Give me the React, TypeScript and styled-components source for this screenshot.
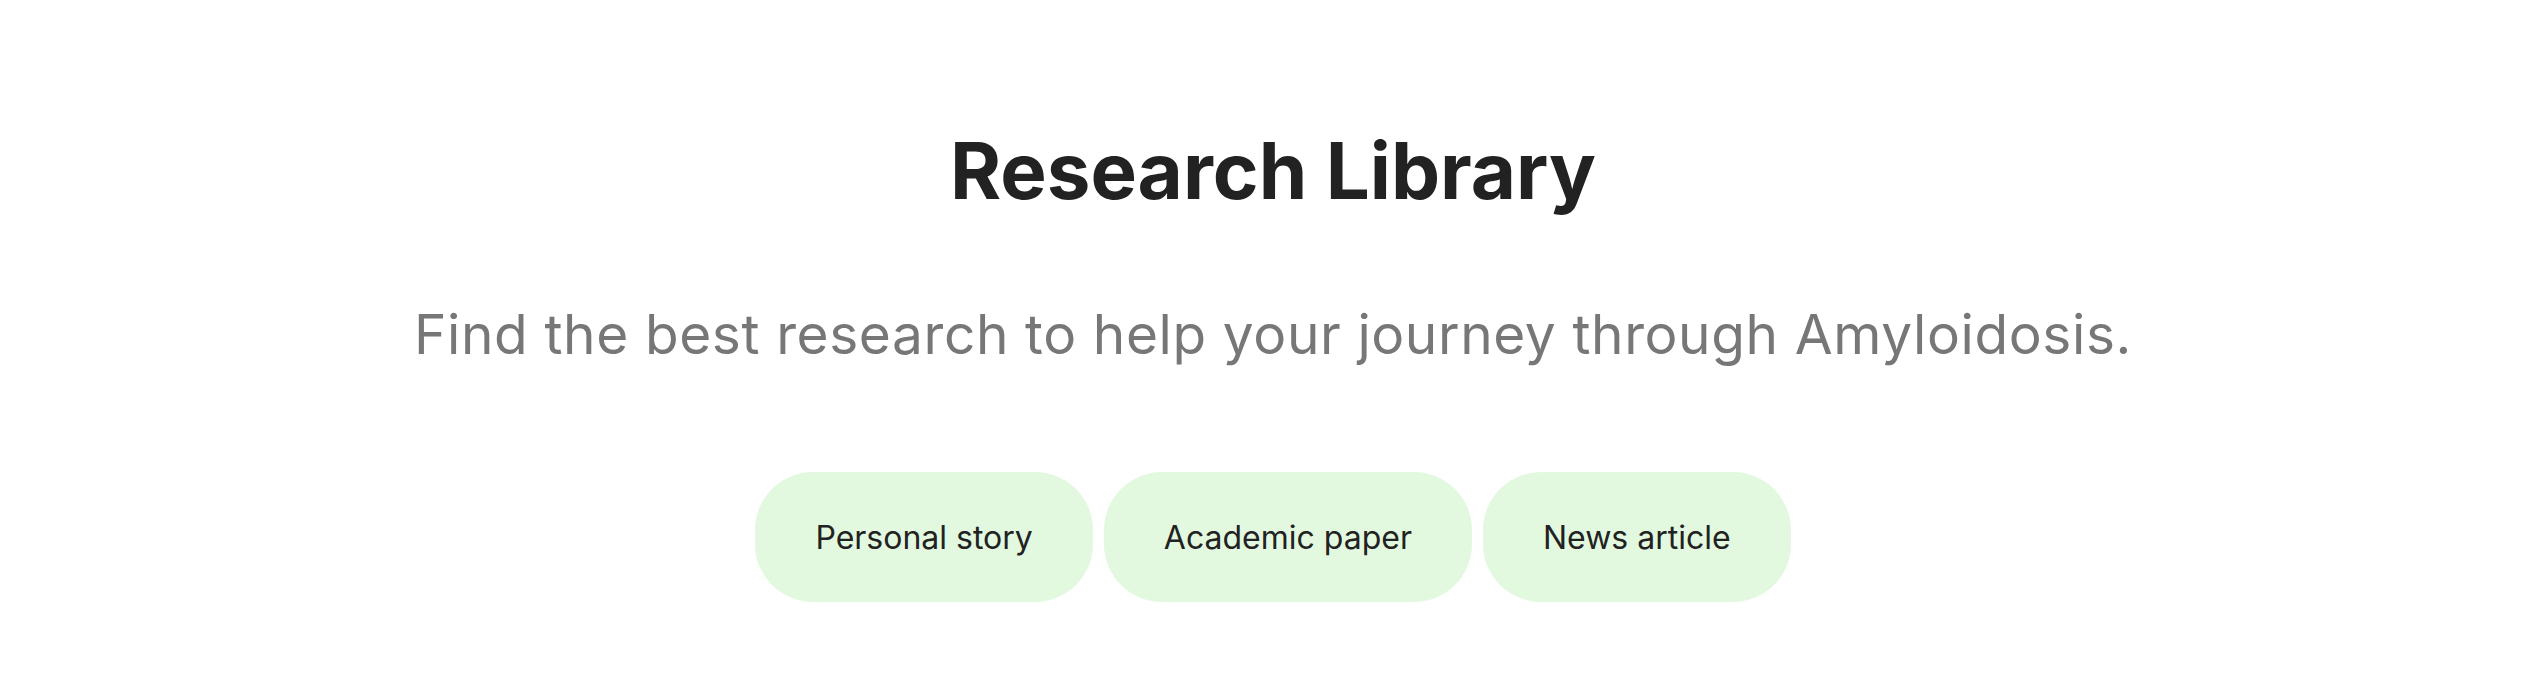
import React from "react";
import styled, { createGlobalStyle } from "styled-components";

const GlobalStyle = createGlobalStyle`
  html, body {
    margin: 0;
    padding: 0;
    background: #ffffff;
  }
  body {
    font-family: "Inter", "Noto Sans", sans-serif;
  }
`;

const Page = styled.main`
  display: flex;
  flex-direction: column;
  align-items: center;
  padding-top: 132px;
  min-height: 686px;
  box-sizing: border-box;
`;

const Title = styled.h1`
  margin: 0;
  font-family: "Inter", sans-serif;
  font-weight: 700;
  font-size: 78px;
  line-height: 78px;
  color: #222222;
  letter-spacing: 0px;
`;

const Subtitle = styled.p`
  margin: 97px 0 0;
  font-family: "Inter", sans-serif;
  font-weight: 400;
  font-size: 55px;
  line-height: 55px;
  color: #777777;
  letter-spacing: 0.6px;
`;

const Filters = styled.div`
  display: flex;
  gap: 11px;
  margin-top: 110px;
`;

const Pill = styled.button`
  display: flex;
  align-items: center;
  justify-content: center;
  height: 130px;
  padding: 0 60px;
  border: none;
  border-radius: 58px;
  background: #e2f9e0;
  font-family: "Inter", sans-serif;
  font-size: 32px;
  font-weight: 400;
  color: #222222;
  cursor: pointer;
`;

const categories = ["Personal story", "Academic paper", "News article"];

export default function App() {
  return (
    <>
      <GlobalStyle />
      <Page>
        <Title>Research Library</Title>
        <Subtitle>Find the best research to help your journey through Amyloidosis.</Subtitle>
        <Filters>
          {categories.map((c) => (
            <Pill key={c}>{c}</Pill>
          ))}
        </Filters>
      </Page>
    </>
  );
}
